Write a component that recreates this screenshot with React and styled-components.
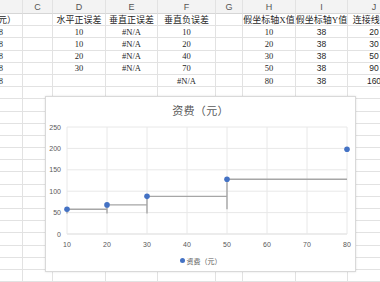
import React from "react";
import styled, { createGlobalStyle } from "styled-components";

const GlobalStyle = createGlobalStyle`
  html, body {
    margin: 0;
    padding: 0;
    background: #ffffff;
    overflow: hidden;
  }
`;

const Page = styled.div`
  position: relative;
  width: 380px;
  height: 282px;
  overflow: hidden;
`;

const Sheet = styled.div`
  display: grid;
  grid-template-columns: 23px 30px 53px 52px 58px 27px 53px 52px 53px;
  grid-template-rows: 14px;
  grid-auto-rows: 12.2px;
  width: 401px;
`;

const Cell = styled.div`
  box-sizing: border-box;
  border-right: 1px solid #e2e2e2;
  border-bottom: 1px solid #e2e2e2;
  display: flex;
  align-items: center;
  justify-content: ${({ $align }) => $align || "center"};
  padding-right: ${({ $pr }) => $pr || 0}px;
  overflow: hidden;
  white-space: nowrap;
  color: #1f1f1f;
  font-family: ${({ $sans }) =>
    $sans
      ? '"Liberation Sans", "Noto Sans CJK SC", sans-serif'
      : '"Liberation Serif", "Noto Sans CJK SC", serif'};
  font-size: ${({ $cjk }) => ($cjk ? "9px" : "8.5px")};
`;

const HeadCell = styled(Cell)`
  background: #f3f3f3;
  border-bottom: 1px solid #d6d6d6;
  color: #555555;
  font-family: "Liberation Sans", sans-serif;
  font-size: 9px;
`;

const ChartCard = styled.div`
  position: absolute;
  left: 45px;
  top: 96px;
  width: 311px;
  height: 176px;
  box-sizing: border-box;
  background: #ffffff;
  border: 1px solid #d9d9d9;
  box-shadow: 0 0 2px rgba(0, 0, 0, 0.12);
  display: flex;
  flex-direction: column;
`;

const Title = styled.div`
  height: 25px;
  display: flex;
  align-items: center;
  justify-content: center;
  color: #595959;
  font-family: "Noto Sans CJK SC", sans-serif;
  font-size: 11px;
  letter-spacing: 0.3px;
`;

const Plot = styled.svg`
  display: block;
  width: 309px;
  height: 128px;
`;

const Legend = styled.div`
  flex: 1;
  display: flex;
  align-items: center;
  justify-content: center;
  gap: 2px;
  color: #595959;
  font-family: "Noto Sans CJK SC", sans-serif;
  font-size: 7px;
`;

const Dot = styled.span`
  width: 5px;
  height: 5px;
  border-radius: 50%;
  background: #4472c4;
`;

const letters = ["", "C", "D", "E", "F", "G", "H", "I", "J"];

const rows = [
  ["资费（元）", "", "水平正误差", "垂直正误差", "垂直负误差", "", "假坐标轴X值", "假坐标轴Y值", "连接线Y值"],
  ["58", "", "10", "#N/A", "10", "", "10", "38", "20"],
  ["68", "", "10", "#N/A", "20", "", "20", "38", "30"],
  ["88", "", "20", "#N/A", "40", "", "30", "38", "50"],
  ["128", "", "30", "#N/A", "70", "", "50", "38", "90"],
  ["198", "", "", "", "#N/A", "", "80", "38", "160"],
];

const TOTAL_ROWS = 22;

const points = [
  { x: 10, y: 58, plus: 10, minus: 10 },
  { x: 20, y: 68, plus: 10, minus: 20 },
  { x: 30, y: 88, plus: 20, minus: 40 },
  { x: 50, y: 128, plus: 30, minus: 70 },
  { x: 80, y: 198, plus: 0, minus: 0 },
];

const X0 = 21;
const X1 = 301;
const YTOP = 5;
const YBOT = 112;
const sx = (v) => X0 + ((v - 10) * (X1 - X0)) / 70;
const sy = (v) => YBOT - (v * (YBOT - YTOP)) / 250;

const Chart = () => (
  <ChartCard>
    <Title>资费（元）</Title>
    <Plot viewBox="0 0 309 128">
      {[0, 50, 100, 150, 200, 250].map((v) => (
        <g key={"h" + v}>
          <line x1={X0} x2={X1} y1={sy(v)} y2={sy(v)} stroke={v === 0 ? "#d9d9d9" : "#e8e8e8"} strokeWidth="1" />
          <text x={15} y={sy(v) + 2.5} textAnchor="end" fontSize="7" fill="#595959" fontFamily="Liberation Sans, sans-serif">
            {v}
          </text>
        </g>
      ))}
      {[10, 20, 30, 40, 50, 60, 70, 80].map((v) => (
        <g key={"v" + v}>
          <line x1={sx(v)} x2={sx(v)} y1={YTOP} y2={YBOT} stroke="#e8e8e8" strokeWidth="1" />
          <text x={sx(v)} y={124.5} textAnchor="middle" fontSize="7" fill="#595959" fontFamily="Liberation Sans, sans-serif">
            {v}
          </text>
        </g>
      ))}
      {points.map((p, i) => (
        <g key={"e" + i}>
          {p.plus > 0 && (
            <line x1={sx(p.x)} x2={sx(p.x + p.plus)} y1={sy(p.y)} y2={sy(p.y)} stroke="#a6a6a6" strokeWidth="1.4" />
          )}
          {p.minus > 0 && (
            <line x1={sx(p.x)} x2={sx(p.x)} y1={sy(p.y)} y2={sy(p.y - p.minus)} stroke="#a6a6a6" strokeWidth="1.4" />
          )}
        </g>
      ))}
      {points.map((p, i) => (
        <circle key={"p" + i} cx={sx(p.x)} cy={sy(p.y)} r="2.8" fill="#4472c4" />
      ))}
    </Plot>
    <Legend>
      <Dot />
      <span>资费（元）</span>
    </Legend>
  </ChartCard>
);

export default function App() {
  const body = [];
  for (let r = 0; r < TOTAL_ROWS; r++) {
    const data = rows[r] || [];
    for (let c = 0; c < 9; c++) {
      const text = data[c] || "";
      const cjk = /[\u4e00-\u9fff]/.test(text);
      const first = c === 0;
      body.push(
        <Cell
          key={r + "-" + c}
          $cjk={cjk}
          $sans={c >= 7 && !cjk}
          $align={first ? "flex-end" : "center"}
          $pr={first ? (cjk ? 6 : 19) : 0}
        >
          {text}
        </Cell>
      );
    }
  }

  return (
    <Page>
      <GlobalStyle />
      <Sheet>
        {letters.map((l, i) => (
          <HeadCell key={"L" + i}>{l}</HeadCell>
        ))}
        {body}
      </Sheet>
      <Chart />
    </Page>
  );
}
